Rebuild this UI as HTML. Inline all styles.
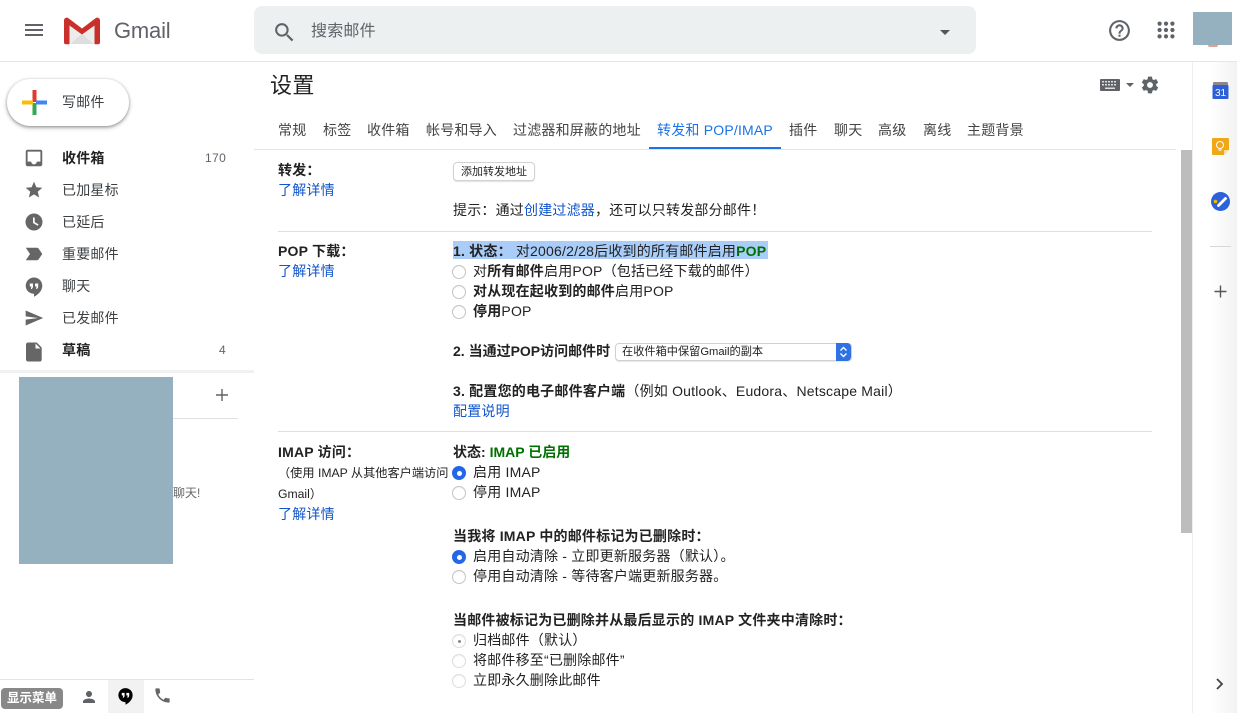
<!DOCTYPE html>
<html lang="zh">
<head>
<meta charset="utf-8">
<title>Gmail 设置</title>
<style>
html,body{margin:0;padding:0;background:#fff}
body{width:1237px;height:713px;position:relative;overflow:hidden;font-family:"Liberation Sans","Noto Sans CJK SC",sans-serif;color:#222;font-size:14px}
.a{position:absolute;white-space:nowrap}
.t{position:absolute;white-space:nowrap;font-size:14px;line-height:20px;letter-spacing:.2px;color:#222}
.b{font-weight:700}
.l{color:#15c}
.nav{position:absolute;left:62px;font-size:14px;line-height:20px;color:#3c4043;letter-spacing:.2px;white-space:nowrap}
.ic{position:absolute;left:22px;width:24px;height:24px}
.tab{position:absolute;top:120px;font-size:14px;line-height:20px;color:#444;letter-spacing:.2px;white-space:nowrap}
.hr{position:absolute;left:278px;width:874px;height:1px;background:#e0e0e0}
.r{position:absolute;left:452px;width:12px;height:12px;border:1px solid #c4c4c4;border-radius:50%;background:#fff;box-shadow:inset 0 1px 1px rgba(0,0,0,.05)}
.r.on{background:#2468e8;border-color:#2468e8}
.r.on:after{content:"";position:absolute;left:3.5px;top:3.5px;width:5px;height:5px;border-radius:50%;background:#fff}
.r.dis{border-color:#ddd}
.r.dis:after{content:"";position:absolute;left:4.5px;top:4.5px;width:3px;height:3px;border-radius:50%;background:#888}
</style>
</head>
<body>

<!-- top bar -->
<div class="a" style="left:0;top:61px;width:1237px;height:1px;background:#e6e6e6"></div>
<svg class="a" style="left:22px;top:18px" width="24" height="24" viewBox="0 0 24 24"><path d="M3 18h18v-2H3v2zm0-5h18v-2H3v2zm0-7v2h18V6H3z" fill="#5f6368"/></svg>

<svg class="a" style="left:63px;top:16px" width="38" height="29" viewBox="0 0 38 29">
<path d="M2 5 L19 17 L36 5 V27 H2Z" fill="#ececec"/>
<path d="M7 28 L19 18 L31 28Z" fill="#dedede"/>
<path d="M1 4.500C1 2 3.500 .8 5.500 2.200L19 12.500 32.500 2.200C34.500 .8 37 2 37 4.500V26.500C37 27.500 36.300 28.200 35.300 28.200H31.500V9.500L19 18.500 6.500 9.500V28.200H2.700C1.700 28.200 1 27.500 1 26.500Z" fill="#c9302c"/>
</svg>
<div class="a" style="left:114px;top:16px;font-size:22px;line-height:30px;color:#5f6368;letter-spacing:-.2px">Gmail</div>

<div class="a" style="left:254px;top:6px;width:722px;height:48px;background:#ecf0f1;border-radius:8px"></div>
<svg class="a" style="left:272px;top:20px" width="25" height="25" viewBox="0 0 24 24"><path d="M15.500 14h-.79l-.28-.27C15.410 12.590 16 11.110 16 9.500 16 5.910 13.090 3 9.500 3S3 5.910 3 9.500 5.910 16 9.500 16c1.610 0 3.090-.59 4.230-1.570l.27.28v.79l5 4.990L20.490 19l-4.990-5zm-6 0C7.010 14 5 11.990 5 9.500S7.010 5 9.500 5 14 7.010 14 9.500 11.990 14 9.500 14z" fill="#5f6368"/></svg>
<div class="a" style="left:311px;top:20px;font-size:16px;line-height:23px;color:#5f6368;letter-spacing:.2px">搜索邮件</div>
<div class="a" style="left:940px;top:30px;width:0;height:0;border-left:5px solid transparent;border-right:5px solid transparent;border-top:5.500px solid #555"></div>

<svg class="a" style="left:1107px;top:18px" width="25" height="25" viewBox="0 0 24 24"><path d="M11 18h2v-2h-2v2zm1-16C6.480 2 2 6.480 2 12s4.480 10 10 10 10-4.480 10-10S17.520 2 12 2zm0 18c-4.410 0-8-3.590-8-8s3.590-8 8-8 8 3.590 8 8-3.590 8-8 8zm0-14c-2.210 0-4 1.790-4 4h2c0-1.100.9-2 2-2s2 .9 2 2c0 2-3 1.750-3 5h2c0-2.250 3-2.500 3-5 0-2.210-1.790-4-4-4z" fill="#5f6368"/></svg>
<svg class="a" style="left:1155px;top:19px" width="22" height="22" viewBox="0 0 24 24" fill="#5f6368"><circle cx="5" cy="5" r="2.300"/><circle cx="12" cy="5" r="2.300"/><circle cx="19" cy="5" r="2.300"/><circle cx="5" cy="12" r="2.300"/><circle cx="12" cy="12" r="2.300"/><circle cx="19" cy="12" r="2.300"/><circle cx="5" cy="19" r="2.300"/><circle cx="12" cy="19" r="2.300"/><circle cx="19" cy="19" r="2.300"/></svg>
<div class="a" style="left:1208px;top:45px;width:10px;height:2px;background:#e8a08a;border-radius:0 0 6px 6px"></div>
<div class="a" style="left:1193px;top:12px;width:39px;height:33px;background:#95b1c0"></div>

<!-- compose -->
<div class="a" style="left:7px;top:79px;width:122px;height:47px;border-radius:24px;background:#fff;box-shadow:0 1px 3px rgba(60,64,67,.5),0 2px 5px rgba(60,64,67,.2)"></div>
<svg class="a" style="left:22px;top:90px" width="25" height="25" viewBox="0 0 25 25">
<rect x="10.500" y="0" width="4" height="12" fill="#e23a2e"/>
<rect x="14" y="10.500" width="11" height="4" fill="#4285f4"/>
<rect x="10.500" y="13" width="4" height="12" fill="#34a853"/>
<rect x="0" y="10.500" width="11" height="4" fill="#fbbc05"/>
</svg>
<div class="a" style="left:62px;top:92px;font-size:14px;line-height:20px;color:#3c4043;letter-spacing:.2px">写邮件</div>

<!-- nav -->
<svg class="ic" style="left:23.300px;top:147.300px;width:22px;height:22px" viewBox="0 0 24 24"><path d="M19 3H5C3.900 3 3 3.900 3 5v14c0 1.100.9 2 2 2h14c1.100 0 2-.9 2-2V5c0-1.100-.9-2-2-2zm0 13h-4c0 1.660-1.340 3-3 3s-3-1.340-3-3H5V5h14v11z" fill="#666"/></svg>
<div class="nav b" style="top:148px;color:#222">收件箱</div>
<div class="a" style="left:205px;top:148px;font-size:12px;line-height:20px;color:#5f6368;letter-spacing:.4px">170</div>

<svg class="ic" style="left:24px;top:180px;width:20px;height:20px" viewBox="0 0 24 24"><path d="M12 17.270L18.180 21l-1.640-7.030L22 9.240l-7.190-.61L12 2 9.190 8.630 2 9.240l5.460 4.730L5.820 21z" fill="#666"/></svg>
<div class="nav" style="top:180px">已加星标</div>

<svg class="ic" style="top:210px" viewBox="0 0 24 24"><path d="M12 3.500a8.500 8.500 0 1 0 0 17 8.500 8.500 0 0 0 0-17zm3.700 12.300L11 13V7.500h1.700v4.600l3.900 2.300z" fill="#666" fill-rule="evenodd"/></svg>
<div class="nav" style="top:212px">已延后</div>

<svg class="ic" style="top:242px" viewBox="0 0 24 24"><path d="M3.800 18.200L8 12 3.800 5.800H15c.6 0 1.200.3 1.500.7L20.300 12l-3.800 5.500c-.3.400-.9.700-1.500.7z" fill="#666"/></svg>
<div class="nav" style="top:244px">重要邮件</div>

<svg class="ic" style="top:274px" viewBox="0 0 24 24"><path d="M12 3.500a8.300 8.300 0 0 0-8.300 8.300c0 4.500 3.700 8 8.300 8v3c4.500-2.200 8.300-6.300 8.300-11A8.300 8.300 0 0 0 12 3.500z" fill="#666"/><path d="M7.800 9.500h3.200v3c0 1.400-.8 2.400-2 2.800v-1.800c.3-.2.400-.5.400-1H7.800zm5.200 0h3.200v3c0 1.400-.8 2.400-2 2.800v-1.800c.3-.2.400-.5.400-1H13z" fill="#fff"/></svg>
<div class="nav" style="top:276px">聊天</div>

<svg class="ic" style="left:24.300px;top:307.500px;width:20px;height:20px" viewBox="0 0 24 24"><path d="M2.010 21L23 12 2.010 3 2 10l15 2-15 2z" fill="#666"/></svg>
<div class="nav" style="top:308px">已发邮件</div>

<svg class="ic" style="top:338.500px" viewBox="0 0 24 24"><path d="M6 3.500c-1.100 0-2 .9-2 2v15c0 1.100.9 2 2 2h12c1.100 0 1.700-.9 1.700-2V8.500l-5-5zM13.500 9.500V4.500l5 5z" fill="#666"/></svg>
<div class="nav b" style="top:340px;color:#222">草稿</div>
<div class="a" style="left:219px;top:340px;font-size:12px;line-height:20px;color:#5f6368">4</div>

<!-- hangouts panel -->
<div class="a" style="left:0;top:370px;width:254px;height:3px;background:#f1f1f1"></div>
<div class="a" style="left:19px;top:377px;width:154px;height:187px;background:#95b1c0"></div>
<div class="a" style="left:173px;top:418px;width:65px;height:1px;background:#e0e0e0"></div>
<svg class="a" style="left:214px;top:387px" width="16" height="16" viewBox="0 0 16 16"><path d="M7.300 2h1.400v5.300H14v1.400H8.700V14H7.300V8.700H2V7.300h5.300z" fill="#5f6368"/></svg>
<div class="a" style="left:173px;top:485px;font-size:12px;line-height:17px;color:#666">聊天!</div>

<!-- bottom bar -->
<div class="a" style="left:0;top:679px;width:254px;height:1px;background:#e3e3e3"></div>
<div class="a" style="left:108px;top:680px;width:36px;height:33px;background:#f2f2f2"></div>
<div class="a" style="left:1px;top:688px;width:62px;height:21px;border-radius:4px;background:#888;color:#fff;font-size:12.500px;line-height:21px;text-align:center;font-weight:700">显示菜单</div>
<svg class="a" style="left:80px;top:688px" width="18" height="18" viewBox="0 0 24 24"><path d="M12 12c2.210 0 4-1.790 4-4s-1.790-4-4-4-4 1.790-4 4 1.790 4 4 4zm0 2c-2.670 0-8 1.340-8 4v2h16v-2c0-2.660-5.330-4-8-4z" fill="#5f6368"/></svg>
<svg class="a" style="left:116px;top:686px" width="19" height="20" viewBox="0 0 24 24"><path d="M12 2a9 9 0 0 0-9 9c0 5 4 8.700 9 8.700V23c4.800-2.400 9-6.800 9-12a9 9 0 0 0-9-9z" fill="#000"/><path d="M7.300 8h3.600v3.400c0 1.500-.9 2.700-2.200 3.100v-2c.3-.2.500-.6.500-1.100H7.300zm5.800 0h3.600v3.400c0 1.500-.9 2.700-2.200 3.100v-2c.3-.2.500-.6.500-1.100h-1.900z" fill="#fff"/></svg>
<svg class="a" style="left:153px;top:686px" width="19" height="19" viewBox="0 0 24 24"><path d="M6.620 10.790c1.440 2.830 3.760 5.140 6.590 6.590l2.200-2.200c.27-.27.670-.36 1.020-.24 1.120.37 2.330.57 3.570.57.550 0 1 .45 1 1V20c0 .55-.45 1-1 1C10.610 21 3 13.390 3 4c0-.55.45-1 1-1h3.500c.55 0 1 .45 1 1 0 1.250.2 2.450.57 3.570.11.350.03.740-.25 1.020z" fill="#666"/></svg>

<!-- settings head -->
<div class="a" style="left:270px;top:70px;font-size:22px;line-height:31px;color:#222;letter-spacing:.4px">设置</div>
<svg class="a" style="left:1100px;top:79px" width="20" height="12" viewBox="0 0 20 12"><rect width="20" height="12" rx="1" fill="#5f6368"/><g fill="#ddd"><rect x="2" y="2" width="2" height="1.500"/><rect x="5" y="2" width="2" height="1.500"/><rect x="8" y="2" width="2" height="1.500"/><rect x="11" y="2" width="2" height="1.500"/><rect x="14" y="2" width="2" height="1.500"/><rect x="2" y="5" width="2" height="1.500"/><rect x="5" y="5" width="2" height="1.500"/><rect x="8" y="5" width="2" height="1.500"/><rect x="11" y="5" width="2" height="1.500"/><rect x="14" y="5" width="2" height="1.500"/><rect x="5" y="8.500" width="10" height="1.500"/></g></svg>
<div class="a" style="left:1126px;top:83px;width:0;height:0;border-left:4px solid transparent;border-right:4px solid transparent;border-top:4px solid #5f6368"></div>
<svg class="a" style="left:1140px;top:74.500px" width="20" height="20" viewBox="0 0 24 24"><path d="M19.430 12.980c.04-.32.070-.64.070-.98s-.03-.66-.07-.98l2.110-1.650c.19-.15.240-.42.120-.64l-2-3.460c-.12-.22-.39-.3-.61-.22l-2.490 1c-.52-.4-1.080-.73-1.690-.98l-.38-2.650C14.460 2.180 14.250 2 14 2h-4c-.25 0-.46.180-.49.420l-.38 2.650c-.61.250-1.170.59-1.690.98l-2.490-1c-.23-.09-.49 0-.61.220l-2 3.460c-.13.220-.07.490.12.640l2.110 1.650c-.04.320-.07.650-.07.980s.03.660.07.980l-2.110 1.650c-.19.150-.24.420-.12.640l2 3.460c.12.220.39.300.61.220l2.490-1c.52.400 1.080.730 1.690.980l.38 2.650c.3.240.24.420.49.420h4c.25 0 .46-.18.49-.42l.38-2.650c.61-.25 1.170-.59 1.690-.98l2.490 1c.23.090.49 0 .61-.22l2-3.460c.12-.22.070-.49-.12-.64zM12 15.500c-1.930 0-3.500-1.570-3.500-3.500s1.570-3.500 3.500-3.500 3.500 1.570 3.500 3.500-1.570 3.500-3.500 3.500z" fill="#5f6368"/></svg>

<!-- tabs -->
<div class="tab" style="left:278px">常规</div>
<div class="tab" style="left:323px">标签</div>
<div class="tab" style="left:367px">收件箱</div>
<div class="tab" style="left:426px">帐号和导入</div>
<div class="tab" style="left:513px">过滤器和屏蔽的地址</div>
<div class="tab" style="left:657px;color:#1a73e8">转发和 POP/IMAP</div>
<div class="tab" style="left:789px">插件</div>
<div class="tab" style="left:834px">聊天</div>
<div class="tab" style="left:878px">高级</div>
<div class="tab" style="left:923px">离线</div>
<div class="tab" style="left:967px">主题背景</div>
<div class="a" style="left:649px;top:147px;width:132px;height:3px;background:#1a73e8"></div>
<div class="a" style="left:254px;top:149px;width:922px;height:1px;background:#e4e4e4"></div>

<!-- forwarding -->
<div class="t b" style="left:278px;top:160px">转发&#xFF1A;</div>
<div class="t l" style="left:278px;top:180px">了解详情</div>
<div class="a" style="left:453px;top:162px;width:80px;height:17px;border:1px solid #d2d2d2;border-radius:4px;background:#fff;box-shadow:0 1px 1px rgba(0,0,0,.12);font-size:11px;line-height:18px;text-align:center;color:#222">添加转发地址</div>
<div class="t" style="left:453px;top:200px">提示&#xFF1A;通过<span class="l">创建过滤器</span>&#xFF0C;还可以只转发部分邮件&#xFF01;</div>
<div class="hr" style="top:231px"></div>

<!-- POP -->
<div class="t b" style="left:278px;top:241px">POP 下载&#xFF1A;</div>
<div class="t l" style="left:278px;top:261px">了解详情</div>
<div class="a" style="left:453px;top:241px;width:315px;height:18px;background:#a9cdf8"></div>
<div class="t" style="left:453px;top:241px"><span class="b">1. 状态&#xFF1A;</span> 对2006/2/28后收到的所有邮件启用<span class="b" style="color:#007000">POP</span></div>
<div class="r" style="top:265px"></div>
<div class="t" style="left:473px;top:261px">对<span class="b">所有邮件</span>启用POP&#xFF08;包括已经下载的邮件&#xFF09;</div>
<div class="r" style="top:285px"></div>
<div class="t" style="left:473px;top:281px"><span class="b">对从现在起收到的邮件</span>启用POP</div>
<div class="r" style="top:305px"></div>
<div class="t" style="left:473px;top:301px"><span class="b">停用</span>POP</div>
<div class="t b" style="left:453px;top:341px;letter-spacing:0">2. 当通过POP访问邮件时</div>
<div class="a" style="left:615px;top:343px;width:235px;height:16px;border:1px solid #d0d0d0;border-radius:4px;background:#fff;box-shadow:0 1px 1px rgba(0,0,0,.1);font-size:11.200px;line-height:16px;text-indent:6px;color:#222;box-sizing:content-box">在收件箱中保留Gmail的副本</div>
<svg class="a" style="left:836px;top:343px" width="15" height="18" viewBox="0 0 15 18"><path d="M0 0h11a4 4 0 0 1 4 4v10a4 4 0 0 1-4 4H0z" fill="#2f72e4"/><path d="M4.500 7.500L7.500 4.500 10.500 7.500M4.500 10.500L7.500 13.500 10.500 10.500" fill="none" stroke="#fff" stroke-width="1.400"/></svg>
<div class="t" style="left:453px;top:381px"><span class="b">3. 配置您的电子邮件客户端</span>&#xFF08;例如 Outlook、Eudora、Netscape Mail&#xFF09;</div>
<div class="t l" style="left:453px;top:401px">配置说明</div>
<div class="hr" style="top:431px"></div>

<!-- IMAP -->
<div class="t b" style="left:278px;top:442px">IMAP 访问&#xFF1A;</div>
<div class="a" style="left:278px;top:463px;font-size:12.200px;line-height:20px;color:#222">&#xFF08;使用 IMAP 从其他客户端访问</div>
<div class="a" style="left:278px;top:484px;font-size:12.200px;line-height:20px;color:#222">Gmail&#xFF09;</div>
<div class="t l" style="left:278px;top:504px">了解详情</div>
<div class="t" style="left:453px;top:442px;letter-spacing:0"><span class="b">状态: <span style="color:#007000">IMAP 已启用</span></span></div>
<div class="r on" style="top:466px"></div>
<div class="t" style="left:473px;top:462px">启用 IMAP</div>
<div class="r" style="top:486px"></div>
<div class="t" style="left:473px;top:482px">停用 IMAP</div>
<div class="t b" style="left:453px;top:526px">当我将 IMAP 中的邮件标记为已删除时&#xFF1A;</div>
<div class="r on" style="top:550px"></div>
<div class="t" style="left:473px;top:546px">启用自动清除 - 立即更新服务器&#xFF08;默认&#xFF09;。</div>
<div class="r" style="top:570px"></div>
<div class="t" style="left:473px;top:566px">停用自动清除 - 等待客户端更新服务器。</div>
<div class="t b" style="left:453px;top:610px">当邮件被标记为已删除并从最后显示的 IMAP 文件夹中清除时&#xFF1A;</div>
<div class="r dis" style="top:634px"></div>
<div class="t" style="left:473px;top:630px">归档邮件&#xFF08;默认&#xFF09;</div>
<div class="r" style="top:654px;border-color:#ddd"></div>
<div class="t" style="left:473px;top:650px">将邮件移至“已删除邮件”</div>
<div class="r" style="top:674px;border-color:#ddd"></div>
<div class="t" style="left:473px;top:670px">立即永久删除此邮件</div>

<!-- scrollbar -->
<div class="a" style="left:1181px;top:150px;width:11px;height:383px;background:#bdbdbd"></div>

<!-- side panel -->
<div class="a" style="left:1192px;top:62px;width:45px;height:651px;background:linear-gradient(90deg,#fff 0,#fff 40%,#f2f2f2 100%);border-left:1px solid #eee;box-sizing:border-box"></div>
<svg class="a" style="left:1212px;top:82px" width="17" height="17" viewBox="0 0 17 17"><rect x="1" y="0" width="15" height="6" rx="1" fill="#8a8a8a"/><rect x="0.500" y="3" width="16" height="14" rx="1" fill="#2f5fd8"/><text x="8.500" y="14" font-size="10" font-family="Liberation Sans" fill="#fff" text-anchor="middle">31</text></svg>
<svg class="a" style="left:1212px;top:138px" width="17" height="17" viewBox="0 0 17 17"><path d="M1 0h15a1 1 0 0 1 1 1v11l-5 5H1a1 1 0 0 1-1-1V1a1 1 0 0 1 1-1z" fill="#f0a818"/><path d="M12 17v-4a1 1 0 0 1 1-1h4z" fill="#fbe3a8"/><circle cx="8" cy="7" r="3.500" fill="none" stroke="#fff" stroke-width="1"/><path d="M6.500 12h3" stroke="#fff" stroke-width="1.200"/></svg>
<svg class="a" style="left:1211px;top:192px" width="19" height="19" viewBox="0 0 19 19"><circle cx="9.500" cy="9.500" r="9.500" fill="#2b62dc"/><path d="M7.500 13.500L14.500 6.500" stroke="#fff" stroke-width="2.800" stroke-linecap="round"/><circle cx="4.500" cy="9.500" r="1.800" fill="#f5b400"/></svg>
<div class="a" style="left:1210px;top:246px;width:21px;height:1px;background:#d8d8d8"></div>
<svg class="a" style="left:1213px;top:284px" width="15" height="15" viewBox="0 0 15 15"><path d="M6.800 1.500h1.400v5.300h5.300v1.400H8.200v5.300H6.800V8.200H1.500V6.800h5.300z" fill="#555"/></svg>
<svg class="a" style="left:1214px;top:678px" width="12" height="12" viewBox="0 0 12 12"><path d="M3 1l5 5-5 5" fill="none" stroke="#444" stroke-width="1.800"/></svg>

</body>
</html>
